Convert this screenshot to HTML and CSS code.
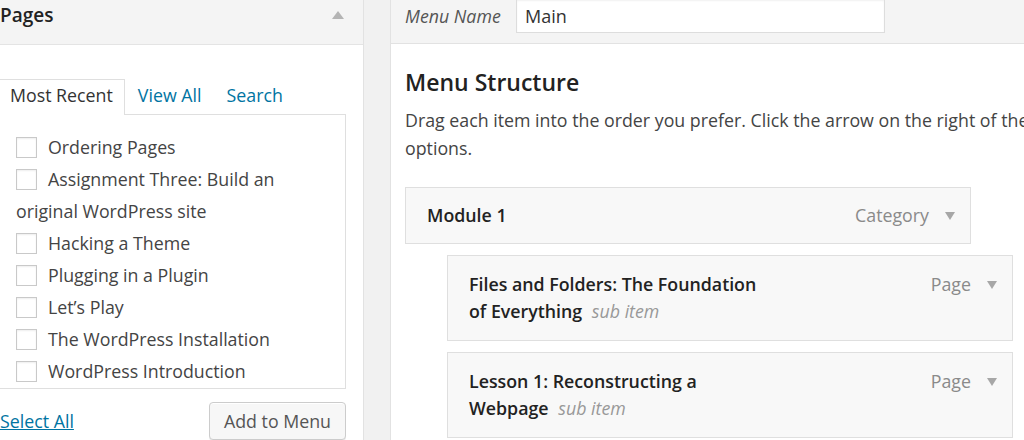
FILE: index.html
```html
<!DOCTYPE html>
<html lang="en">
<head>
<meta charset="utf-8">
<title>Menus</title>
<link rel="stylesheet" href="styles.css">
</head>
<body>
<div class="screen">
  <aside class="side">
    <div class="acc-title">
      <h3>Pages</h3>
      <svg class="collapse" width="12" height="8" viewBox="0 0 12 8"><polygon points="0,8 6,0 12,8" fill="#b4b4b4"/></svg>
    </div>
    <div class="acc-body">
      <ul class="tabs">
        <li class="tab active">Most Recent</li>
        <li class="tab"><a href="#">View All</a></li>
        <li class="tab"><a href="#">Search</a></li>
      </ul>
      <div class="tab-panel">
        <ul class="checklist">
          <li><span class="cb"></span>Ordering Pages</li>
          <li><span class="cb"></span>Assignment Three: Build an original WordPress site</li>
          <li><span class="cb"></span>Hacking a Theme</li>
          <li><span class="cb"></span>Plugging in a Plugin</li>
          <li><span class="cb"></span>Let’s Play</li>
          <li><span class="cb"></span>The WordPress Installation</li>
          <li><span class="cb"></span>WordPress Introduction</li>
        </ul>
      </div>
      <div class="actions">
        <a href="#" class="select-all">Select All</a>
        <button class="btn">Add to Menu</button>
      </div>
    </div>
  </aside>

  <main class="menu-mgmt">
    <div class="menu-header">
      <label class="name-label">Menu Name</label>
      <div class="name-input">Main</div>
    </div>
    <div class="menu-body">
      <h2>Menu Structure</h2>
      <p>Drag each item into the order you prefer. Click the arrow on the right of the item to reveal additional configuration options.</p>
      <ul class="menu">
        <li class="item">
          <span class="item-title">Module 1</span>
          <span class="item-controls">Category <svg class="arrow" width="10" height="8" viewBox="0 0 10 8"><polygon points="0,0 10,0 5,8" fill="#a7a7a7"/></svg></span>
        </li>
        <li class="item sub">
          <span class="item-title">Files and Folders: The Foundation of Everything <em>sub item</em></span>
          <span class="item-controls">Page <svg class="arrow" width="10" height="8" viewBox="0 0 10 8"><polygon points="0,0 10,0 5,8" fill="#a7a7a7"/></svg></span>
        </li>
        <li class="item sub">
          <span class="item-title">Lesson 1: Reconstructing a Webpage <em>sub item</em></span>
          <span class="item-controls">Page <svg class="arrow" width="10" height="8" viewBox="0 0 10 8"><polygon points="0,0 10,0 5,8" fill="#a7a7a7"/></svg></span>
        </li>
      </ul>
    </div>
  </main>
</div>
</body>
</html>
```

FILE: styles.css
```css
html, body {
  margin: 0;
  padding: 0;
  overflow: hidden;
  background: #f1f1f1;
}
body {
  font-family: "Open Sans", "Liberation Sans", sans-serif;
  font-size: 17.8px;
  color: #444;
  width: 1024px;
  height: 440px;
}
ul { list-style: none; margin: 0; padding: 0; }
a { color: #0074a2; text-decoration: none; }

.screen {
  display: flex;
  gap: 26px;
  margin: -12px 0 0 -12px;
  align-items: flex-start;
}

/* Left accordion */
.side {
  flex: none;
  width: 376px;
  box-sizing: border-box;
  border: 1px solid #e2e2e2;
  background: #fff;
  height: 520px;
}
.acc-title {
  height: 55px;
  border-bottom: 1px solid #e4e4e4;
  background: #f4f4f4;
  display: flex;
  align-items: center;
  justify-content: space-between;
  padding: 0 19px 0 11px;
}
.acc-title h3 {
  margin: -3px 0 0 0;
  font-size: 19px;
  font-weight: 600;
  color: #222;
  line-height: 26px;
}
.collapse { margin-top: -3px; }

.acc-body {
  padding: 34px 17px 0 11px;
}
.tabs {
  display: flex;
  margin-left: -2px;
  position: relative;
  z-index: 1;
}
.tab {
  height: 34px;
  line-height: 30px;
  padding: 0 11px 0 11px;
  border: 1px solid transparent;
  border-bottom: none;
  color: #333;
}
.tab.active {
  border-color: #dfdfdf;
  background: #fff;
  margin-bottom: -1px;
  height: 35px;
}
.tab a { color: #0074a2; }
.tab + .tab { padding: 0 11px 0 12px; }

.tab-panel {
  margin-left: -2px;
  height: 273px;
  border: 1px solid #dfdfdf;
  background: #fff;
  overflow: hidden;
  box-sizing: content-box;
}
.checklist {
  padding: 16px 14px 0 17px;
}
.checklist li {
  line-height: 32px;
  color: #444;
}
.cb {
  display: inline-block;
  width: 19px;
  height: 19px;
  border: 1px solid #c9c9c9;
  background: #fff;
  box-shadow: inset 0 1px 2px rgba(0,0,0,0.07);
  vertical-align: middle;
  margin: -4px 11px 0 0;
}

.actions {
  display: flex;
  justify-content: space-between;
  align-items: center;
  margin-top: 13px;
}
.select-all {
  text-decoration: underline;
  margin-top: 0;
}
.btn {
  font-family: inherit;
  font-size: 17.8px;
  color: #555;
  background: #f7f7f7;
  border: 1px solid #cccccc;
  border-radius: 4px;
  box-shadow: inset 0 1px 0 #fff, 0 1px 0 rgba(0,0,0,0.08);
  height: 38px;
  width: 137px;
  padding: 0;
}

/* Right panel */
.menu-mgmt {
  flex: none;
  width: 1040px;
  background: #fff;
  border-left: 1px solid #e2e2e2;
  height: 520px;
}
.menu-header {
  background: #f4f4f4;
  border-bottom: 1px solid #e2e2e2;
  display: flex;
  align-items: center;
  padding: 0 0 0 14px;
  box-sizing: border-box;
  height: 56px;
}
.name-label {
  font-style: italic;
  color: #555;
  width: 111px;
}
.name-input {
  width: 359px;
  height: 32px;
  border: 1px solid #ddd;
  background: #fff;
  box-shadow: inset 0 1px 2px rgba(0,0,0,0.06);
  font-size: 18px;
  color: #333;
  line-height: 32px;
  padding-left: 8px;
  box-sizing: content-box;
  margin-top: 1px;
}
.menu-body {
  padding: 23px 14px 0 14px;
  width: 960px;
}
.menu-body h2 {
  margin: 0;
  font-size: 23px;
  font-weight: 600;
  line-height: 30px;
  color: #222;
}
.menu-body p {
  margin: 9px 0 0 0;
  line-height: 28px;
  color: #444;
}
.menu {
  margin-top: 25px;
  display: flex;
  flex-direction: column;
  gap: 11px;
}
.item {
  width: 528px;
  box-sizing: content-box;
  border: 1px solid #dfdfdf;
  background: #f8f8f8;
  padding: 14px 15px 14px 21px;
  display: flex;
  justify-content: space-between;
  align-items: flex-start;
  line-height: 27px;
}
.item.sub {
  margin-left: 42px;
  padding-top: 15px;
  padding-bottom: 15px;
}
.item-title {
  font-weight: 600;
  color: #222;
  max-width: 300px;
}
.item-title em {
  font-weight: 400;
  color: #999;
  margin-left: 5px;
}
.item-controls {
  color: #8a8a8a;
  display: flex;
  align-items: center;
  gap: 16px;
}
.arrow { margin-top: 1px; }
```
